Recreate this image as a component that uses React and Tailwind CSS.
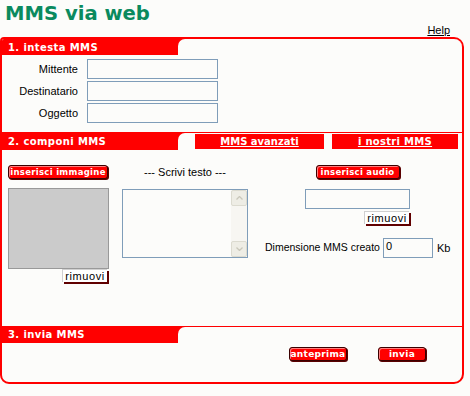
const red = "bg-[#ff0000]";

function RedButton({ children, className = "" }) {
  return (
    <div
      className={`flex items-center justify-center h-[14px] rounded-[3px] ${red} border border-[#3a0000] shadow-[inset_1px_1px_0_#ff8080,1px_1px_0_#5a0000] text-white font-bold text-[8.5px] tracking-[0.3px] leading-none ${className}`}
      style={{ fontFamily: '"DejaVu Sans", Verdana, sans-serif' }}
    >
      {children}
    </div>
  );
}

function Rimuovi({ className = "" }) {
  return (
    <div
      className={`flex items-center justify-center w-[45px] h-[13px] bg-white border-t border-l border-[#d0d0d0] shadow-[2px_2px_0_#600000] text-[11px] leading-none tracking-[0.6px] text-black ${className}`}
    >
      rimuovi
    </div>
  );
}

function SectionHeader({ title, top = "mt-0", h = "h-[18px]", children }) {
  return (
    <div className={`flex ${h} ${red}`}>
      <div
        className="w-[176px] pl-[6px] flex items-center text-white font-bold text-[10px] tracking-[0.4px]"
        style={{ fontFamily: '"DejaVu Sans", Verdana, sans-serif' }}
      >
        {title}
      </div>
      <div className={`flex-1 ${top} bg-[#fcfcfa] rounded-tl-[7px] flex`}>{children}</div>
    </div>
  );
}

function Field({ label }) {
  return (
    <div className="flex items-center h-[20px]">
      <div className="w-[76px] text-right text-[11px] text-black">{label}</div>
      <div className="ml-[9px] w-[131px] h-[20px] border border-[#7f9db9] bg-[#fcfcfa]" />
    </div>
  );
}

export default function App() {
  return (
    <div
      className="w-[470px] h-[396px] bg-[#fcfcfa] overflow-hidden"
      style={{ fontFamily: '"Liberation Sans", Arial, sans-serif' }}
    >
      <div
        className="pl-[5px] pt-[1px] h-[24px] text-[19.6px] font-bold leading-[26px] text-[#0a8a5e]"
        style={{ fontFamily: '"DejaVu Sans", Verdana, sans-serif' }}
      >
        MMS via web
      </div>
      <div className="flex justify-end pr-[20px] h-[13px] text-[11px] leading-[13px] underline text-black">
        Help
      </div>

      <div className="w-[464px] h-[347px] border-2 border-[#ff0000] rounded-tl-[4px] rounded-tr-[10px] rounded-bl-[9px] rounded-br-[10px] overflow-hidden flex flex-col">
        <SectionHeader title="1. intesta MMS" h="h-[16px]" />
        <div className="h-[77px] pt-[4px] flex flex-col gap-[2px]">
          <Field label="Mittente" />
          <Field label="Destinatario" />
          <Field label="Oggetto" />
        </div>

        <SectionHeader title="2. componi MMS" top="mt-[1px]">
          <div className="flex items-start pt-[1px] pl-[17px] gap-[8px]">
            <div
              className={`w-[129px] h-[15px] ${red} flex items-center justify-center text-white font-bold text-[10px] underline`}
              style={{ fontFamily: '"DejaVu Sans", Verdana, sans-serif' }}
            >
              MMS avanzati
            </div>
            <div
              className={`w-[126px] h-[15px] ${red} flex items-center justify-center text-white font-bold text-[10px] underline tracking-[0.3px]`}
              style={{ fontFamily: '"DejaVu Sans", Verdana, sans-serif' }}
            >
              i nostri MMS
            </div>
          </div>
        </SectionHeader>

        <div className="h-[176px] flex pt-[15px]">
          <div className="ml-[6px] w-[101px] flex flex-col">
            <RedButton className="w-[100px]">inserisci immagine</RedButton>
            <div className="mt-[9px] h-[81px] bg-[#cbcbcb] border border-[#999999]" />
            <div className="flex justify-end pr-[2px]">
              <Rimuovi />
            </div>
          </div>

          <div className="ml-[13px] w-[126px] flex flex-col">
            <div className="h-[14px] flex items-center justify-center text-[11px] text-black">
              --- Scrivi testo ---
            </div>
            <div className="mt-[10px] h-[69px] border border-[#7f9db9] flex">
              <div className="flex-1" />
              <div className="w-[16px] bg-[#f7f6f2] flex flex-col justify-between">
                <div className="h-[16px] rounded-[2px] bg-[#eeede5] border border-[#dcdbd0] flex items-center justify-center">
                  <svg width="7" height="4" viewBox="0 0 7 4">
                    <path d="M0.5 3.5 L3.5 0.5 L6.5 3.5" fill="none" stroke="#c9c7ba" strokeWidth="1.3" />
                  </svg>
                </div>
                <div className="h-[16px] rounded-[2px] bg-[#eeede5] border border-[#dcdbd0] flex items-center justify-center">
                  <svg width="7" height="4" viewBox="0 0 7 4">
                    <path d="M0.5 0.5 L3.5 3.5 L6.5 0.5" fill="none" stroke="#c9c7ba" strokeWidth="1.3" />
                  </svg>
                </div>
              </div>
            </div>
          </div>

          <div className="w-[212px] flex flex-col">
            <div className="ml-[57px] w-[105px] flex flex-col items-center">
              <RedButton className="w-[84px]">inserisci audio</RedButton>
              <div className="mt-[10px] w-[105px] h-[20px] border border-[#7f9db9]" />
              <Rimuovi className="self-end mt-[2px] mr-[1px]" />
            </div>
            <div className="mt-[14px] ml-[17px] flex items-center text-[10.5px] text-black">
              <span>Dimensione MMS creato</span>
              <div className="ml-[3px] w-[50px] h-[20px] border border-[#7f9db9] pl-[2px] text-[11px] leading-[14px]">
                0
              </div>
              <span className="ml-[4px] text-[11px]">Kb</span>
            </div>
          </div>
        </div>

        <SectionHeader title="3. invia MMS" top="mt-[1px]" h="h-[17px]" />
        <div className="flex pt-[4px] pl-[287px]">
          <RedButton className="w-[58px] text-[9px]">anteprima</RedButton>
          <RedButton className="ml-[31px] w-[48px] text-[9px]">invia</RedButton>
        </div>
      </div>
    </div>
  );
}
